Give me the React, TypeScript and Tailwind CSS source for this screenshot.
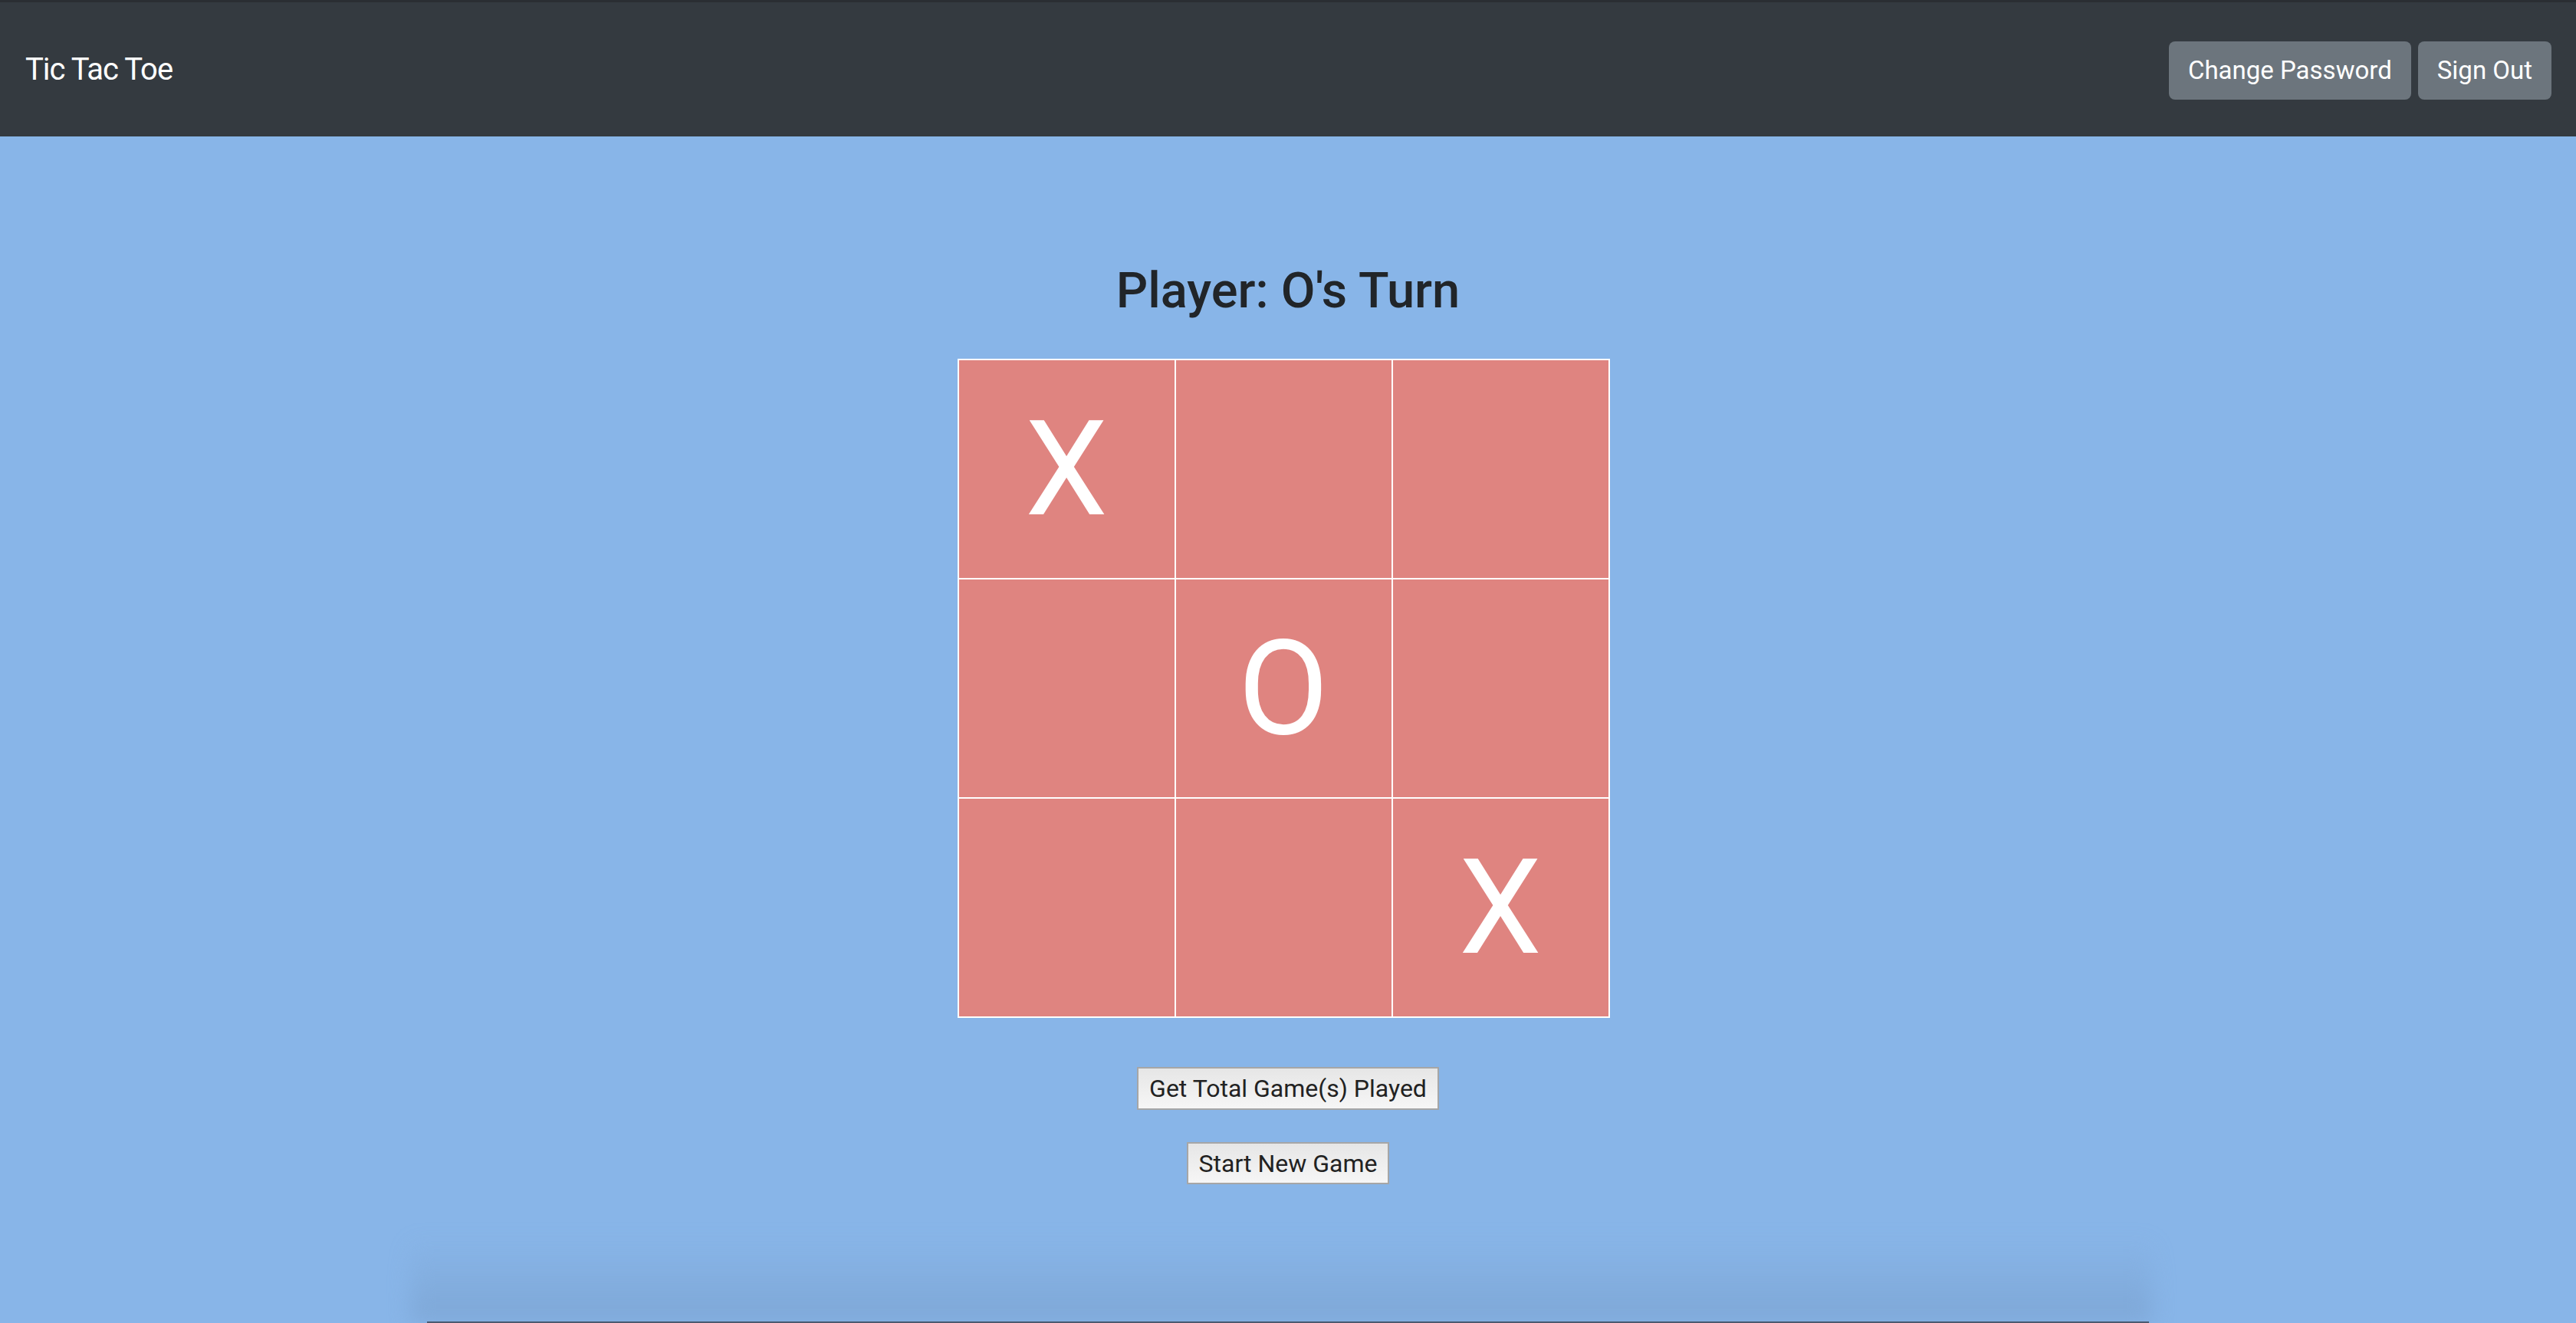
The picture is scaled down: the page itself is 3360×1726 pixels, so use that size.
import React from "react";

const board: string[] = ["X", "", "", "", "O", "", "", "", "X"];

export default function App() {
  return (
    <div
      className="relative w-full h-[1726px] overflow-hidden bg-[#88b5e8] flex flex-col"
      style={{ fontFamily: 'Roboto, "Noto Sans", "Liberation Sans", sans-serif' }}
    >
      <nav className="h-[178px] shrink-0 bg-[#343a40] border-t-[3px] border-[#2a2e33] flex items-center justify-between pl-[33px] pr-[32px]">
        <span className="text-white text-[40px] leading-none tracking-[-1px]">Tic Tac Toe</span>
        <div className="flex items-center gap-[9px] mt-[2px]">
          <button className="h-[76px] px-[25px] rounded-[8px] bg-[#6c757d] text-white text-[33px] leading-none">
            Change Password
          </button>
          <button className="h-[76px] px-[25px] rounded-[8px] bg-[#6c757d] text-white text-[33px] leading-none">
            Sign Out
          </button>
        </div>
      </nav>

      <main className="flex flex-col items-center pt-[163px]">
        <h2 className="text-[65px] leading-[77px] font-medium text-[#212529] mb-[50px]">
          Player: O's Turn
        </h2>
        <div className="grid grid-cols-3 gap-[2px] p-[2px] bg-white mr-[12px]">
          {board.map((v, i) => (
            <div
              key={i}
              className="w-[281px] h-[284px] bg-[#df8480] flex items-center justify-center text-white text-[172px] leading-none font-normal"
            >
              {v}
            </div>
          ))}
        </div>
        <button className="mt-[64px] h-[56px] px-[14px] border-2 border-[#a6a6a6] bg-gradient-to-b from-[#e6e6e6] to-[#f6f6f6] text-[#222] text-[32px] leading-none">
          Get Total Game(s) Played
        </button>
        <button className="mt-[42px] h-[55px] px-[14px] border-2 border-[#a6a6a6] bg-gradient-to-b from-[#e6e6e6] to-[#f6f6f6] text-[#222] text-[32px] leading-none">
          Start New Game
        </button>
      </main>

      <div className="pointer-events-none absolute bottom-0 left-[536px] right-[553px] h-[110px] bg-gradient-to-b from-transparent to-[#7ea7d6] blur-[14px]" />
      <div className="pointer-events-none absolute bottom-0 left-[557px] right-[557px] h-[2px] bg-[#4a5a70]" />
    </div>
  );
}
